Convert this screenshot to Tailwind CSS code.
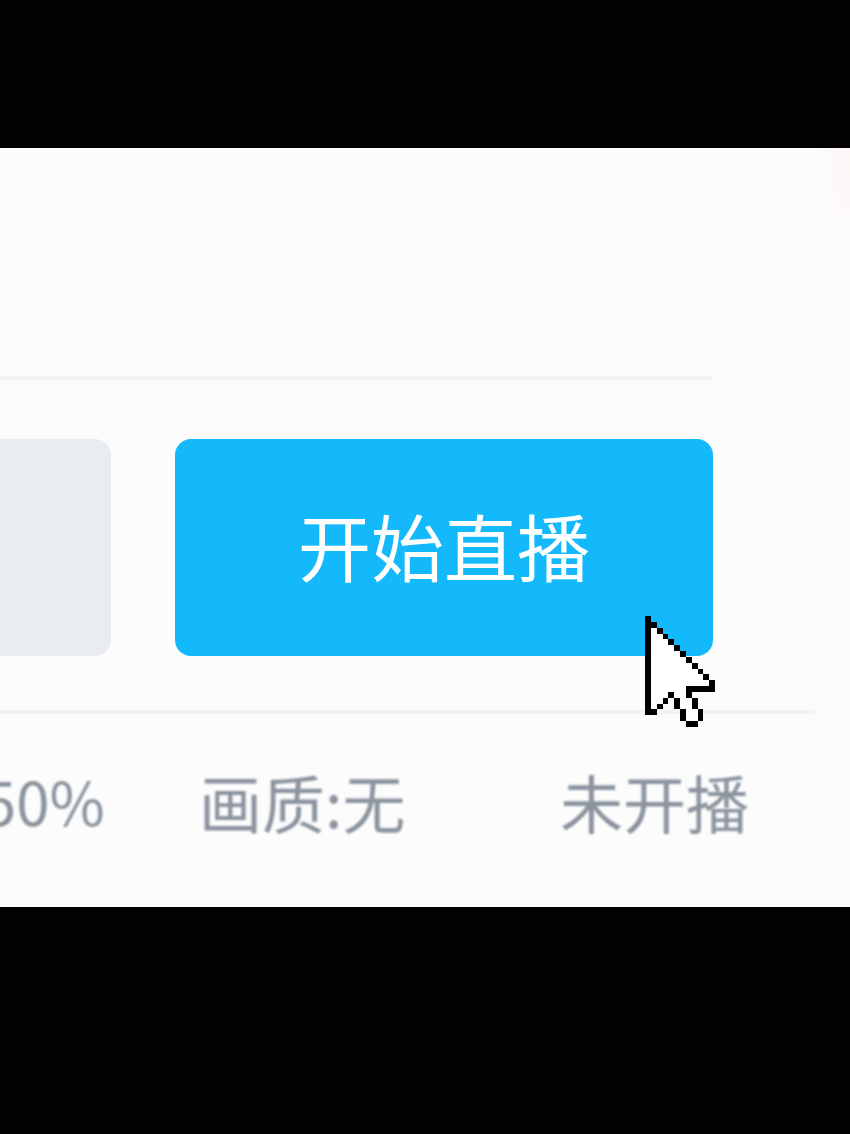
<!DOCTYPE html>
<html lang="zh">
<head>
<meta charset="utf-8">
<script src="https://cdn.jsdelivr.net/npm/@tailwindcss/browser@4"></script>
</head>
<body class="bg-black">
<div class="w-[850px] h-[1134px] flex flex-col bg-black overflow-hidden font-['Noto_Sans_CJK_SC','Noto_Sans',sans-serif]">
  <div class="h-[148px] shrink-0 bg-[#020203]"></div>
  <main class="relative h-[759px] shrink-0 overflow-hidden bg-[#fcfcfc] pt-[228px]">
    <div class="absolute right-0 top-0 h-[120px] w-[40px] bg-[radial-gradient(ellipse_at_top_right,#fdf6f5,#fcfcfc_70%)]"></div>
    <div class="h-[4px] w-[713px] bg-[#f4f3f2] blur-[0.6px]"></div>
    <div class="mt-[59px] flex h-[217px] gap-[64px]">
      <div class="w-[111px] rounded-r-[16px] bg-[#e9edf2] blur-[0.5px]"></div>
      <button class="flex w-[538px] items-center justify-center rounded-[16px] bg-[#14b9fb] pb-[7px] text-[73px] font-normal leading-none text-white blur-[0.7px]">开始直播</button>
    </div>
    <div class="mt-[54px] h-[4px] w-[815px] bg-[#f4f3f2] blur-[0.6px]"></div>
    <div class="relative mt-[46px] flex h-[80px] items-center text-[63px] leading-none text-[#8a939e] blur-[0.8px]">
      <span class="ml-[-17px] w-[216px] text-[60px]">50%</span>
      <span class="w-[361px]">画质:无</span>
      <span>未开播</span>
    </div>
    <svg class="absolute left-[645px] top-[468px] w-[70px] h-[111px] blur-[0.3px]" viewBox="0 0 12 19" shape-rendering="crispEdges" aria-hidden="true">
      <path fill="#fff" d="M1 1h1v1h1v1h1v1h1v1h1v1h1v1h1v1h1v1h1v1h1v1v1H7v2h1v2h1v2H7v-2H6v-2H5v-1H4v1H3v1H2v1H1z"/>
      <g fill="#000">
        <rect x="0" y="0" width="1" height="17"/>
        <rect x="1" y="1" width="1" height="1"/>
        <rect x="2" y="2" width="1" height="1"/>
        <rect x="3" y="3" width="1" height="1"/>
        <rect x="4" y="4" width="1" height="1"/>
        <rect x="5" y="5" width="1" height="1"/>
        <rect x="6" y="6" width="1" height="1"/>
        <rect x="7" y="7" width="1" height="1"/>
        <rect x="8" y="8" width="1" height="1"/>
        <rect x="9" y="9" width="1" height="1"/>
        <rect x="10" y="10" width="1" height="1"/>
        <rect x="11" y="11" width="1" height="2"/>
        <rect x="7" y="12" width="4" height="1"/>
        <rect x="7" y="13" width="1" height="1"/>
        <rect x="8" y="14" width="1" height="2"/>
        <rect x="9" y="16" width="1" height="2"/>
        <rect x="7" y="18" width="2" height="1"/>
        <rect x="6" y="16" width="1" height="2"/>
        <rect x="5" y="14" width="1" height="2"/>
        <rect x="4" y="13" width="1" height="1"/>
        <rect x="3" y="14" width="1" height="1"/>
        <rect x="2" y="15" width="1" height="1"/>
        <rect x="1" y="16" width="1" height="1"/>
      </g>
    </svg>
  </main>
  <div class="flex-1 bg-[#020203]"></div>
</div>
</body>
</html>
